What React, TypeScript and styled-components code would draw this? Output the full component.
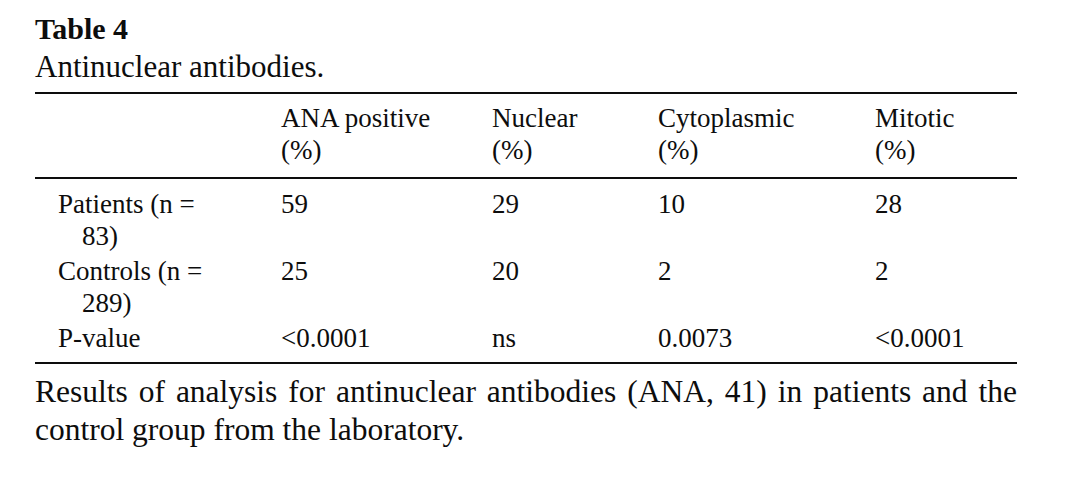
import styled, { createGlobalStyle } from "styled-components";

const GlobalStyle = createGlobalStyle`
  html, body {
    margin: 0;
    padding: 0;
    background: #ffffff;
  }
  body {
    font-family: "Liberation Serif", "Times New Roman", serif;
    color: #0d0d0d;
  }
`;

const COLUMNS = [246, 211, 166, 217, 142];

const HEADERS = [
  ["ANA positive", "(%)"],
  ["Nuclear", "(%)"],
  ["Cytoplasmic", "(%)"],
  ["Mitotic", "(%)"]
];

const ROWS = [
  { label: "Patients (n = 83)", values: ["59", "29", "10", "28"] },
  { label: "Controls (n = 289)", values: ["25", "20", "2", "2"] },
  { label: "P-value", values: ["<0.0001", "ns", "0.0073", "<0.0001"] }
];

const Page = styled.div`
  padding: 10px 0 0 35px;
  width: 982px;
`;

const Title = styled.div`
  font-size: 30px;
  line-height: 38px;
  font-weight: 700;
`;

const Subtitle = styled.div`
  font-size: 31px;
  line-height: 38px;
`;

const Table = styled.table`
  margin-top: 6px;
  width: 982px;
  table-layout: fixed;
  border-collapse: separate;
  border-spacing: 0;
  font-size: 27px;
  line-height: 32px;
`;

const Col = styled.col<{ $w: number }>`
  width: ${(p) => p.$w}px;
`;

const HeadCell = styled.th`
  text-align: left;
  font-weight: 400;
  vertical-align: top;
  padding: 8px 0 11px 0;
  border-top: 2px solid #0d0d0d;
  border-bottom: 2px solid #0d0d0d;
`;

const Cell = styled.td<{ $first?: boolean; $last?: boolean }>`
  vertical-align: top;
  padding: ${(p) => (p.$first ? "9px" : "1.5px")} 0 ${(p) => (p.$last ? "8px" : "1.5px")} 0;
  border-bottom: ${(p) => (p.$last ? "2px solid #0d0d0d" : "none")};
`;

const LabelCell = styled(Cell)`
  padding-left: 47px;
  padding-right: 70px;
  text-indent: -24px;
`;

const Caption = styled.p`
  margin: 9px 0 0 0;
  font-size: 31.5px;
  line-height: 38px;
  text-align: justify;
`;

export default function App() {
  return (
    <Page>
      <GlobalStyle />
      <Title>Table 4</Title>
      <Subtitle>Antinuclear antibodies.</Subtitle>
      <Table>
        <colgroup>
          {COLUMNS.map((w, i) => (
            <Col key={i} $w={w} />
          ))}
        </colgroup>
        <thead>
          <tr>
            <HeadCell />
            {HEADERS.map(([top, unit]) => (
              <HeadCell key={top}>
                {top}
                <br />
                {unit}
              </HeadCell>
            ))}
          </tr>
        </thead>
        <tbody>
          {ROWS.map((row, i) => {
            const first = i === 0;
            const last = i === ROWS.length - 1;
            return (
              <tr key={row.label}>
                <LabelCell $first={first} $last={last}>
                  {row.label}
                </LabelCell>
                {row.values.map((v, j) => (
                  <Cell key={j} $first={first} $last={last}>
                    {v}
                  </Cell>
                ))}
              </tr>
            );
          })}
        </tbody>
      </Table>
      <Caption>
        Results of analysis for antinuclear antibodies (ANA, 41) in patients and the control group
        from the laboratory.
      </Caption>
    </Page>
  );
}
